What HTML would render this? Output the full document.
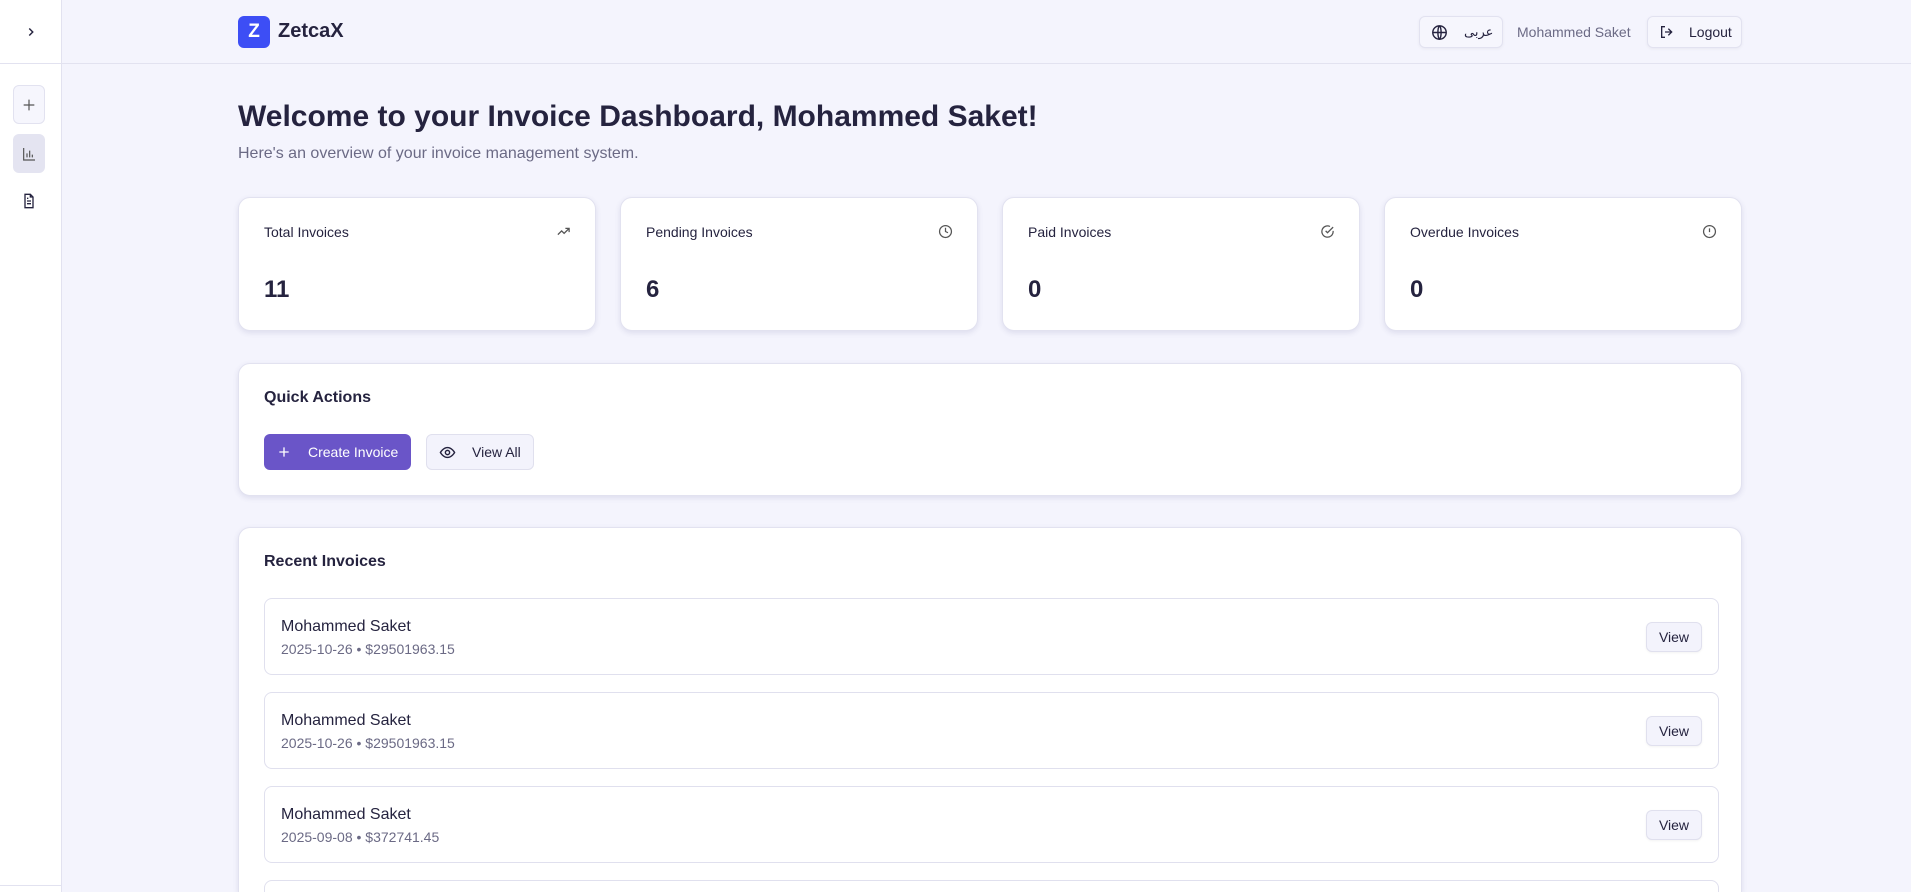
<!DOCTYPE html>
<html style="overflow:hidden;height:892px"><head><meta charset="utf-8"><style>
*{box-sizing:border-box;margin:0;padding:0}
body{width:1911px;height:892px;overflow:hidden;background:#f4f4fd;font-family:"Liberation Sans","Noto Sans CJK SC",sans-serif;color:#25233f;position:relative}
#wrap{position:absolute;left:0;top:0;width:1911px;height:892px;overflow:hidden}
.side{position:absolute;left:0;top:0;width:62px;height:892px;background:#fff;border-right:1px solid #e2e2f0}
.side .top{height:64px;border-bottom:1px solid #e2e2f0;display:flex;align-items:center;justify-content:center}
.sbtn{position:absolute;left:13px;width:32px;height:39px;border-radius:6px;display:flex;align-items:center;justify-content:center}
.hdr{position:absolute;left:62px;top:0;right:0;height:64px;border-bottom:1px solid #e2e2f0}
.logo{position:absolute;left:238px;top:16px;width:32px;height:32px;border-radius:6px;background:#3d4ef5;color:#fff;font-weight:bold;font-size:19px;display:flex;align-items:center;justify-content:center}
.brand{position:absolute;left:278px;top:20px;font-weight:bold;font-size:20px}
.hb{position:absolute;top:16px;height:32px;background:#f6f6fd;border:1px solid #e2e2f0;border-radius:6px;box-shadow:0 1px 3px rgba(0,0,0,.05);display:flex;align-items:center;font-size:14px}
.card{position:absolute;background:#fff;border:1px solid #e2e2f0;border-radius:12px;box-shadow:0 2px 6px rgba(60,60,120,.12)}
.lbl{position:absolute;left:25px;top:26px;font-size:14px}
.num{position:absolute;left:25px;top:78px;font-size:24px;font-weight:bold}
.ic{position:absolute;right:24px;top:26px}
.h3{position:absolute;left:25px;font-size:16px;font-weight:bold}
.row{position:absolute;left:25px;width:1455px;height:77px;border:1px solid #e0e0ee;border-radius:8px}
.row .n{position:absolute;left:16px;top:19px;font-size:16px}
.row .d{position:absolute;left:16px;top:42px;font-size:14px;color:#6b6a85}
.row .v{position:absolute;right:16px;top:23px;width:56px;height:30px;background:#f3f3fc;border:1px solid #e0e0ee;border-radius:6px;font-size:14px;display:flex;align-items:center;justify-content:center;box-shadow:0 1px 2px rgba(0,0,0,.05)}
</style></head><body><div id="wrap">
<div class="side"><div class="top"><svg width="14" height="14" viewBox="0 0 24 24" fill="none" stroke="#25233f" stroke-width="2.5"><path d="M9 6l6 6-6 6"/></svg></div>
<div class="sbtn" style="top:85px;border:1px solid #e2e2f0;background:#f6f6fd"><svg width="16" height="16" viewBox="0 0 24 24" fill="none" stroke="#555" stroke-width="1.8"><path d="M12 4v16M4 12h16"/></svg></div>
<div class="sbtn" style="top:134px;background:#e4e4f1"><svg width="16" height="16" viewBox="0 0 24 24" fill="none" stroke="#555" stroke-width="1.8"><path d="M4 3v18h17M9 17v-6M13 17V7M17 17v-4"/></svg></div>
<div class="sbtn" style="top:181px"><svg width="16" height="16" viewBox="0 0 24 24" fill="none" stroke="#25233f" stroke-width="2"><path d="M14 2H6v20h12V6zM14 2v4h4M9 12h6M9 16h6M9 8h2"/></svg></div>
<div style="position:absolute;left:0;right:0;top:885px;border-top:1px solid #e2e2f0"></div>
</div>
<div class="hdr"></div>
<div class="logo">Z</div><div class="brand">ZetcaX</div>
<div class="hb" style="left:1419px;width:84px;padding-left:11px"><svg width="17" height="17" viewBox="0 0 24 24" fill="none" stroke="#25233f" stroke-width="2"><circle cx="12" cy="12" r="9.5"/><path d="M2.5 12h19M12 2.5c3 3 3 16 0 19M12 2.5c-3 3-3 16 0 19"/></svg><span style="margin-left:16px;font-family:'DejaVu Sans',sans-serif;font-size:13px">عربی</span></div>
<div style="position:absolute;left:1517px;top:24px;font-size:14px;color:#6b6a85">Mohammed Saket</div>
<div class="hb" style="left:1647px;width:95px;padding-left:11px"><svg width="16" height="16" viewBox="0 0 24 24" fill="none" stroke="#25233f" stroke-width="2"><path d="M9 4H4v16h5M14 7l5 5-5 5M19 12H9"/></svg><span style="margin-left:14px">Logout</span></div>
<div style="position:absolute;left:238px;top:100px;font-size:30px;font-weight:bold">Welcome to your Invoice Dashboard, Mohammed Saket!</div>
<div style="position:absolute;left:238px;top:145px;font-size:16px;color:#6b6a85">Here's an overview of your invoice management system.</div>

<div class="card" style="left:238px;top:197px;width:358px;height:134px"><div class="lbl">Total Invoices</div><svg class="ic" width="15" height="15" viewBox="0 0 24 24" fill="none" stroke="#555" stroke-width="2"><path d="M3 17l6-6 4 4 8-8M15 7h6v6"/></svg><div class="num">11</div></div>
<div class="card" style="left:620px;top:197px;width:358px;height:134px"><div class="lbl">Pending Invoices</div><svg class="ic" width="15" height="15" viewBox="0 0 24 24" fill="none" stroke="#555" stroke-width="2"><circle cx="12" cy="12" r="9.5"/><path d="M12 6v6l4 2"/></svg><div class="num">6</div></div>
<div class="card" style="left:1002px;top:197px;width:358px;height:134px"><div class="lbl">Paid Invoices</div><svg class="ic" width="15" height="15" viewBox="0 0 24 24" fill="none" stroke="#555" stroke-width="2"><path d="M21 11v1a9 9 0 1 1-5-8M9 11l3 3 9-9"/></svg><div class="num">0</div></div>
<div class="card" style="left:1384px;top:197px;width:358px;height:134px"><div class="lbl">Overdue Invoices</div><svg class="ic" width="15" height="15" viewBox="0 0 24 24" fill="none" stroke="#555" stroke-width="2"><circle cx="12" cy="12" r="9.5"/><path d="M12 7v6M12 16.5v.5"/></svg><div class="num">0</div></div>

<div class="card" style="left:238px;top:363px;width:1504px;height:133px"><div class="h3" style="top:25px">Quick Actions</div>
<div style="position:absolute;left:25px;top:70px;width:147px;height:36px;background:#6a55c8;border-radius:6px;color:#fff;font-size:14px;display:flex;align-items:center;padding-left:12px"><svg width="16" height="16" viewBox="0 0 24 24" fill="none" stroke="#fff" stroke-width="2"><path d="M12 5v14M5 12h14"/></svg><span style="margin-left:16px">Create Invoice</span></div>
<div style="position:absolute;left:187px;top:70px;width:108px;height:36px;background:#f3f3fc;border:1px solid #e0e0ee;border-radius:6px;font-size:14px;display:flex;align-items:center;padding-left:12px"><svg width="17" height="17" viewBox="0 0 24 24" fill="none" stroke="#25233f" stroke-width="2"><path d="M2 12s4-7 10-7 10 7 10 7-4 7-10 7S2 12 2 12z"/><circle cx="12" cy="12" r="3"/></svg><span style="margin-left:16px">View All</span></div>
</div>

<div class="card" style="left:238px;top:527px;width:1504px;height:365px;border-bottom:none;border-radius:12px 12px 0 0;overflow:hidden"><div class="h3" style="top:25px">Recent Invoices</div>
<div class="row" style="top:70px"><div class="n">Mohammed Saket</div><div class="d">2025-10-26 • $29501963.15</div><div class="v">View</div></div>
<div class="row" style="top:164px"><div class="n">Mohammed Saket</div><div class="d">2025-10-26 • $29501963.15</div><div class="v">View</div></div>
<div class="row" style="top:258px"><div class="n">Mohammed Saket</div><div class="d">2025-09-08 • $372741.45</div><div class="v">View</div></div>
<div class="row" style="top:352px"></div>
</div>
</div></body></html>
